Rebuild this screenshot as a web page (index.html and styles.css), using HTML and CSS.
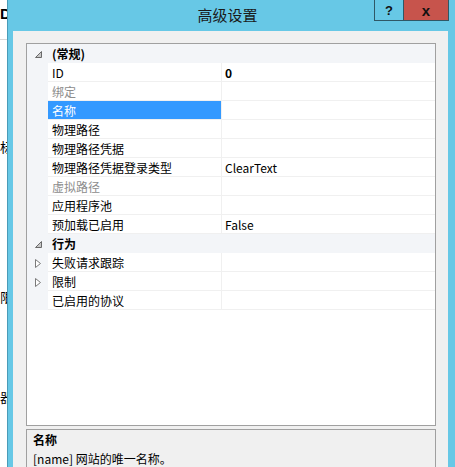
FILE: index.html
```html
<!DOCTYPE html>
<html lang="zh-CN">
<head>
  <meta charset="UTF-8">
  <meta name="viewport" content="width=device-width, initial-scale=1.0">
  <title>高级设置</title>
  <link rel="stylesheet" href="styles.css">
</head>
<body>

<div class="screen">
  <div class="behind">
    <span class="peek peek-top">De</span>
    <div class="peek-line"></div>
    <span class="peek peek-1">标</span>
    <span class="peek peek-2">限</span>
    <span class="peek peek-3">器</span>
  </div>

  <div class="dialog">
    <div class="titlebar">
      <span class="title">高级设置</span>
      <div class="buttons">
        <span class="btn btn-help">?</span>
        <span class="btn btn-close">x</span>
      </div>
    </div>

    <div class="body">
      <div class="grid">
        <div class="row category">
          <span class="gutter"><svg class="exp" width="7" height="7" viewBox="0 0 7 7"><polygon points="6.5,0.5 6.5,6.5 0.5,6.5" fill="#c8c8c8" stroke="#6a6a6a" stroke-width="1"/></svg></span>
          <span class="cat-name">(常规)</span>
        </div>
        <div class="row"><span class="gutter"></span><span class="name">ID</span><span class="value bold">0</span></div>
        <div class="row"><span class="gutter"></span><span class="name disabled">绑定</span><span class="value"></span></div>
        <div class="row selected"><span class="gutter"></span><span class="name">名称</span><span class="value"></span></div>
        <div class="row"><span class="gutter"></span><span class="name">物理路径</span><span class="value"></span></div>
        <div class="row"><span class="gutter"></span><span class="name">物理路径凭据</span><span class="value"></span></div>
        <div class="row"><span class="gutter"></span><span class="name">物理路径凭据登录类型</span><span class="value">ClearText</span></div>
        <div class="row"><span class="gutter"></span><span class="name disabled">虚拟路径</span><span class="value"></span></div>
        <div class="row"><span class="gutter"></span><span class="name">应用程序池</span><span class="value"></span></div>
        <div class="row"><span class="gutter"></span><span class="name">预加载已启用</span><span class="value">False</span></div>
        <div class="row category">
          <span class="gutter"><svg class="exp" width="7" height="7" viewBox="0 0 7 7"><polygon points="6.5,0.5 6.5,6.5 0.5,6.5" fill="#c8c8c8" stroke="#6a6a6a" stroke-width="1"/></svg></span>
          <span class="cat-name">行为</span>
        </div>
        <div class="row">
          <span class="gutter"><svg class="exp" width="6" height="9" viewBox="0 0 6 9"><polygon points="0.5,0.5 5.5,4.5 0.5,8.5" fill="#fff" stroke="#7a7a7a" stroke-width="1"/></svg></span>
          <span class="name">失败请求跟踪</span><span class="value"></span>
        </div>
        <div class="row">
          <span class="gutter"><svg class="exp" width="6" height="9" viewBox="0 0 6 9"><polygon points="0.5,0.5 5.5,4.5 0.5,8.5" fill="#fff" stroke="#7a7a7a" stroke-width="1"/></svg></span>
          <span class="name">限制</span><span class="value"></span>
        </div>
        <div class="row"><span class="gutter"></span><span class="name">已启用的协议</span><span class="value"></span></div>
        <div class="filler"></div>
      </div>

      <div class="desc">
        <div class="desc-title">名称</div>
        <div class="desc-text">[name] 网站的唯一名称。</div>
      </div>
    </div>
  </div>
</div>

</body>
</html>
```

FILE: styles.css
```css
html, body {
  margin: 0;
  padding: 0;
  height: 100%;
  overflow: hidden;
}

body {
  font-family: "Noto Sans CJK SC", "Noto Sans", sans-serif;
  font-size: 12px;
  color: #000;
  background-color: #fff;
}

.screen {
  display: flex;
  height: 467px;
}

.behind {
  width: 7px;
  flex-shrink: 0;
  overflow: hidden;
  display: flex;
  flex-direction: column;
  background-color: #fff;
}

.peek {
  display: block;
  font-size: 13px;
  line-height: 16px;
  white-space: nowrap;
}

.peek-top {
  margin-top: 6px;
  font-family: "Liberation Sans", sans-serif;
  font-weight: bold;
  font-size: 15px;
}

.peek-line {
  margin-top: 17px;
  height: 1px;
  background-color: #d8d8d8;
}

.peek-1 { margin-top: 99px; }
.peek-2 { margin-top: 134px; }
.peek-3 { margin-top: 84px; }

.dialog {
  flex: 1;
  display: flex;
  flex-direction: column;
  background-color: #67c8e6;
  border-left: 1px solid #4a9cb8;
  padding: 0 7px 0 5px;
  min-width: 0;
}

.titlebar {
  height: 31px;
  flex-shrink: 0;
  display: flex;
  justify-content: center;
  align-items: center;
  position: relative;
}

.title {
  font-size: 15px;
  color: #1a1a1a;
  margin-left: -6px;
  margin-top: -2px;
}

.buttons {
  position: absolute;
  top: 0;
  right: -1px;
  display: flex;
}

.btn {
  height: 20px;
  display: flex;
  align-items: center;
  justify-content: center;
  font-family: "Liberation Sans", sans-serif;
  font-weight: bold;
  font-size: 13px;
  border: 1px solid #2f5866;
  border-top: none;
}

.btn-help {
  width: 28px;
  background-color: #67c8e6;
  color: #111;
}

.btn-close {
  width: 44px;
  background-color: #c7544c;
  color: #111;
  border-left: none;
  font-size: 15px;
}

.body {
  flex: 1;
  background-color: #f0f0f0;
  padding: 12px 12px 0 13px;
  display: flex;
  flex-direction: column;
  gap: 3px;
  min-height: 0;
}

.grid {
  height: 383px;
  flex-shrink: 0;
  border: 1px solid #a0a0a0;
  background-color: #fff;
  display: flex;
  flex-direction: column;
  box-sizing: border-box;
}

.row {
  height: 18px;
  display: flex;
  align-items: center;
  border-bottom: 1px solid #f0f0f0;
  flex-shrink: 0;
}

.gutter {
  width: 21px;
  height: 19px;
  flex-shrink: 0;
  align-self: flex-start;
  background-color: #f3f5f8;
  display: flex;
  align-items: center;
  padding-left: 8px;
  padding-top: 1px;
  box-sizing: border-box;
}

.exp {
  display: block;
}

.name {
  width: 174px;
  height: 18px;
  line-height: 16px;
  padding-top: 2px;
  padding-left: 4px;
  box-sizing: border-box;
  border-right: 1px solid #f0f0f0;
  flex-shrink: 0;
  white-space: nowrap;
}

.name.disabled {
  color: #8d8d8d;
}

.value {
  flex: 1;
  height: 18px;
  padding-left: 3px;
  padding-top: 2px;
  line-height: 16px;
  box-sizing: border-box;
}

.value.bold {
  font-weight: bold;
}

.selected .name {
  background-color: #3399ff;
  color: #fff;
}

.category {
  background-color: #f3f5f8;
  border-bottom-color: #f3f5f8;
}

.cat-name {
  height: 18px;
  padding-left: 4px;
  padding-top: 2px;
  font-weight: bold;
  line-height: 16px;
  box-sizing: border-box;
}

.filler {
  flex: 1;
}

.desc {
  flex: 1;
  border: 1px solid #a0a0a0;
  border-bottom: none;
  background-color: #f0f0f0;
  padding: 2px 6px 0;
}

.desc-title {
  font-weight: bold;
  line-height: 16px;
}

.desc-text {
  margin-top: 2px;
  line-height: 18px;
}
```
